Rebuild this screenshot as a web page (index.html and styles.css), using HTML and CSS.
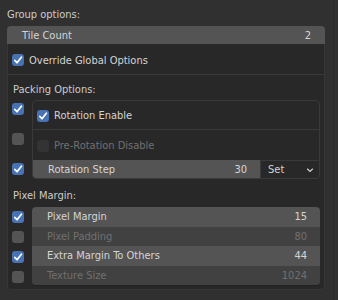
FILE: index.html
```html
<!DOCTYPE html>
<html lang="en">
<head>
  <meta charset="UTF-8">
  <meta name="viewport" content="width=device-width, initial-scale=1.0">
  <title>Group options</title>
  <link rel="stylesheet" href="styles.css">
</head>
<body>
  <div class="page">
    <div class="main">
      <div class="heading">Group options:</div>
      <div class="field top-field">
        <span class="field-label">Tile Count</span>
        <span class="field-value">2</span>
      </div>

      <div class="box">
        <div class="section first">
          <div class="check-row">
            <span class="cb on"><svg viewBox="0 0 12 12"><path d="M2.8 6.4 L5 8.8 L9.4 3.2"/></svg></span>
            <span class="text">Override Global Options</span>
          </div>
        </div>

        <div class="section">
          <div class="label">Packing Options:</div>
          <div class="group">
            <div class="checks">
              <span class="cb on"><svg viewBox="0 0 12 12"><path d="M2.8 6.4 L5 8.8 L9.4 3.2"/></svg></span>
              <span class="cb"></span>
              <span class="cb on"><svg viewBox="0 0 12 12"><path d="M2.8 6.4 L5 8.8 L9.4 3.2"/></svg></span>
            </div>
            <div class="inner">
              <div class="inner-row tall">
                <span class="cb on"><svg viewBox="0 0 12 12"><path d="M2.8 6.4 L5 8.8 L9.4 3.2"/></svg></span>
                <span class="text">Rotation Enable</span>
              </div>
              <div class="inner-row taller disabled">
                <span class="cb off"></span>
                <span class="text">Pre-Rotation Disable</span>
              </div>
              <div class="step-row">
                <div class="field step-field">
                  <span class="field-label">Rotation Step</span>
                  <span class="field-value">30</span>
                </div>
                <div class="dropdown">
                  <span>Set</span>
                  <svg class="chev" viewBox="0 0 8 6"><path d="M1.2 1.8 L4 4.4 L6.8 1.8"/></svg>
                </div>
              </div>
            </div>
          </div>

          <div class="label second">Pixel Margin:</div>
          <div class="group">
            <div class="checks list-checks">
              <span class="cb on"><svg viewBox="0 0 12 12"><path d="M2.8 6.4 L5 8.8 L9.4 3.2"/></svg></span>
              <span class="cb"></span>
              <span class="cb on"><svg viewBox="0 0 12 12"><path d="M2.8 6.4 L5 8.8 L9.4 3.2"/></svg></span>
              <span class="cb"></span>
            </div>
            <div class="list">
              <div class="list-row"><span>Pixel Margin</span><span>15</span></div>
              <div class="list-row disabled"><span>Pixel Padding</span><span>80</span></div>
              <div class="list-row"><span>Extra Margin To Others</span><span>44</span></div>
              <div class="list-row disabled"><span>Texture Size</span><span>1024</span></div>
            </div>
          </div>
        </div>
      </div>
    </div>
    <div class="gutter"></div>
  </div>
</body>
</html>
```

FILE: styles.css
```css
* {
  box-sizing: border-box;
}

html, body {
  margin: 0;
  padding: 0;
}

body {
  background-color: #303030;
  color: #d4d4d4;
  font-family: 'DejaVu Sans Condensed', 'DejaVu Sans', sans-serif;
  font-stretch: condensed;
  font-size: 11px;
  width: 338px;
  height: 300px;
  overflow: hidden;
}

.page {
  display: flex;
  height: 300px;
}

.main {
  width: 325px;
  padding: 7px 0 0 7px;
}

.gutter {
  width: 9px;
  border-right: 1px solid #2a2a2a;
}

.heading {
  line-height: 16px;
  margin-bottom: 3px;
  color: #cccccc;
}

.field {
  display: flex;
  justify-content: space-between;
  align-items: center;
  background-color: #545454;
}

.top-field {
  height: 18px;
  border-radius: 4px 4px 0 0;
  padding: 0 14px 0 15px;
}

.box {
  background-color: #282828;
  border: 1px solid #363636;
  border-top: none;
  border-radius: 0 0 4px 4px;
  height: 246px;
}

.section {
  padding: 0 4px;
}

.section.first {
  height: 31px;
  border-bottom: 1px solid #3a3a3a;
  display: flex;
  align-items: center;
}

.check-row {
  display: flex;
  align-items: center;
  gap: 5px;
  padding-top: 2px;
}

.cb {
  width: 12px;
  height: 12px;
  border-radius: 3px;
  background-color: #545454;
  display: inline-flex;
  flex-shrink: 0;
}

.cb.on {
  background-color: #4772b3;
}

.cb.off {
  background-color: #333333;
}

.cb svg {
  width: 12px;
  height: 12px;
  fill: none;
  stroke: #ffffff;
  stroke-width: 1.7;
  stroke-linecap: round;
  stroke-linejoin: round;
}

.label {
  line-height: 14px;
  padding: 8px 0 3px 1px;
  color: #cccccc;
}

.label.second {
  padding-top: 10px;
  padding-bottom: 4px;
}

.group {
  display: flex;
  gap: 8px;
}

.checks {
  display: flex;
  flex-direction: column;
  gap: 18px;
  padding-top: 3px;
}

.list-checks {
  gap: 8px;
  padding-top: 4px;
}

.inner {
  flex: 1;
  border: 1px solid #3a3a3a;
  border-radius: 4px;
  overflow: hidden;
}

.inner-row {
  display: flex;
  align-items: center;
  gap: 5px;
  padding: 0 4px;
  border-bottom: 1px solid #3a3a3a;
}

.inner-row.tall {
  height: 29px;
  padding-top: 1px;
}

.inner-row.taller {
  height: 30px;
  padding-top: 1px;
  border-bottom: none;
}

.disabled .text,
.list-row.disabled {
  color: #707070;
}

.step-row {
  display: flex;
  height: 18px;
}

.step-field {
  width: 227px;
  padding: 0 13px 0 15px;
}

.dropdown {
  flex: 1;
  display: flex;
  align-items: center;
  justify-content: space-between;
  padding: 0 5px 0 7px;
  border-left: 1px solid #3a3a3a;
  border-top: 1px solid #3a3a3a;
}

.chev {
  width: 8px;
  height: 6px;
  fill: none;
  stroke: #d0d0d0;
  stroke-width: 1.3;
}

.list {
  flex: 1;
  border-radius: 4px;
  overflow: hidden;
  border-bottom: 1px solid #222222;
}

.list-row {
  height: 19.5px;
  display: flex;
  align-items: center;
  justify-content: space-between;
  padding: 0 13px 0 15px;
  background-color: #545454;
}

.list-row.disabled {
  background-color: #414141;
}
```
